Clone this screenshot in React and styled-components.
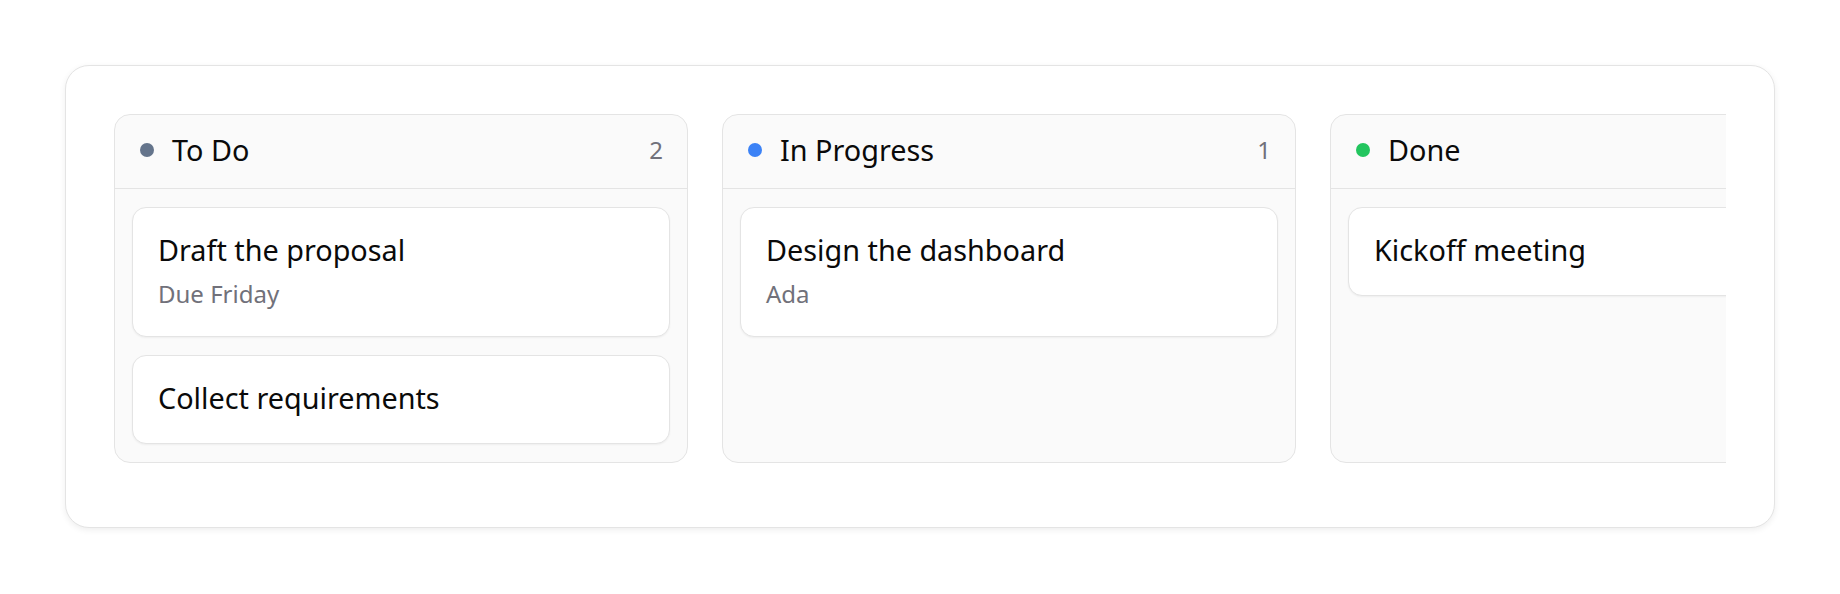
import React from 'react'
import styled, { createGlobalStyle } from 'styled-components'

const GlobalStyle = createGlobalStyle`
  * {
    box-sizing: border-box;
  }

  body {
    margin: 0;
    background: #fff;
    font-family: 'Noto Sans', 'Open Sans', sans-serif;
    color: #0a0a0a;
  }
`

const Page = styled.div`
  padding: 65px;
`

const BoardCard = styled.div`
  background: #fff;
  border: 1px solid #e4e4e4;
  border-radius: 24px;
  padding: 48px;
  box-shadow: 0 2px 6px rgba(0, 0, 0, 0.07);
`

const ColumnsRow = styled.div`
  display: flex;
  gap: 34px;
  align-items: stretch;
  overflow: hidden;
  padding-bottom: 16px;
`

const Column = styled.section`
  flex: 0 0 574px;
  display: flex;
  flex-direction: column;
  background: #fafafa;
  border: 1px solid #e4e4e4;
  border-radius: 16px;
`

const ColumnHeader = styled.header`
  display: flex;
  align-items: center;
  gap: 18px;
  padding: 13px 24px 17px 25px;
  border-bottom: 1px solid #e4e4e4;
`

const Dot = styled.span`
  width: 14px;
  height: 14px;
  border-radius: 50%;
  background: ${(props) => props.color};
  flex-shrink: 0;
`

const ColumnTitle = styled.h2`
  margin: 0;
  flex: 1;
  font-size: 28.8px;
  line-height: 43px;
  font-weight: 400;
  color: #0a0a0a;
`

const Count = styled.span`
  font-size: 24px;
  line-height: 43px;
  color: #71717a;
`

const CardList = styled.div`
  display: flex;
  flex-direction: column;
  gap: 18px;
  padding: 18px 17px;
`

const TaskCard = styled.article`
  background: #fff;
  border: 1px solid #e4e4e4;
  border-radius: 14px;
  padding: 20px 24px 24px 25px;
  box-shadow: 0 1px 2px rgba(0, 0, 0, 0.05);
`

const TaskTitle = styled.div`
  font-size: 28.8px;
  line-height: 43px;
  color: #0a0a0a;
`

const TaskMeta = styled.div`
  margin-top: 5px;
  font-size: 24px;
  line-height: 36px;
  color: #71717a;
`

const columns = [
  {
    title: 'To Do',
    color: '#64748b',
    tasks: [
      { title: 'Draft the proposal', meta: 'Due Friday' },
      { title: 'Collect requirements' },
    ],
  },
  {
    title: 'In Progress',
    color: '#3b82f6',
    tasks: [{ title: 'Design the dashboard', meta: 'Ada' }],
  },
  {
    title: 'Done',
    color: '#22c55e',
    tasks: [{ title: 'Kickoff meeting' }],
  },
]

const App = () => (
  <>
    <GlobalStyle />
    <Page>
      <BoardCard>
        <ColumnsRow>
          {columns.map((col) => (
            <Column key={col.title}>
              <ColumnHeader>
                <Dot color={col.color} />
                <ColumnTitle>{col.title}</ColumnTitle>
                <Count>{col.tasks.length}</Count>
              </ColumnHeader>
              <CardList>
                {col.tasks.map((task) => (
                  <TaskCard key={task.title}>
                    <TaskTitle>{task.title}</TaskTitle>
                    {task.meta && <TaskMeta>{task.meta}</TaskMeta>}
                  </TaskCard>
                ))}
              </CardList>
            </Column>
          ))}
        </ColumnsRow>
      </BoardCard>
    </Page>
  </>
)

export default App
